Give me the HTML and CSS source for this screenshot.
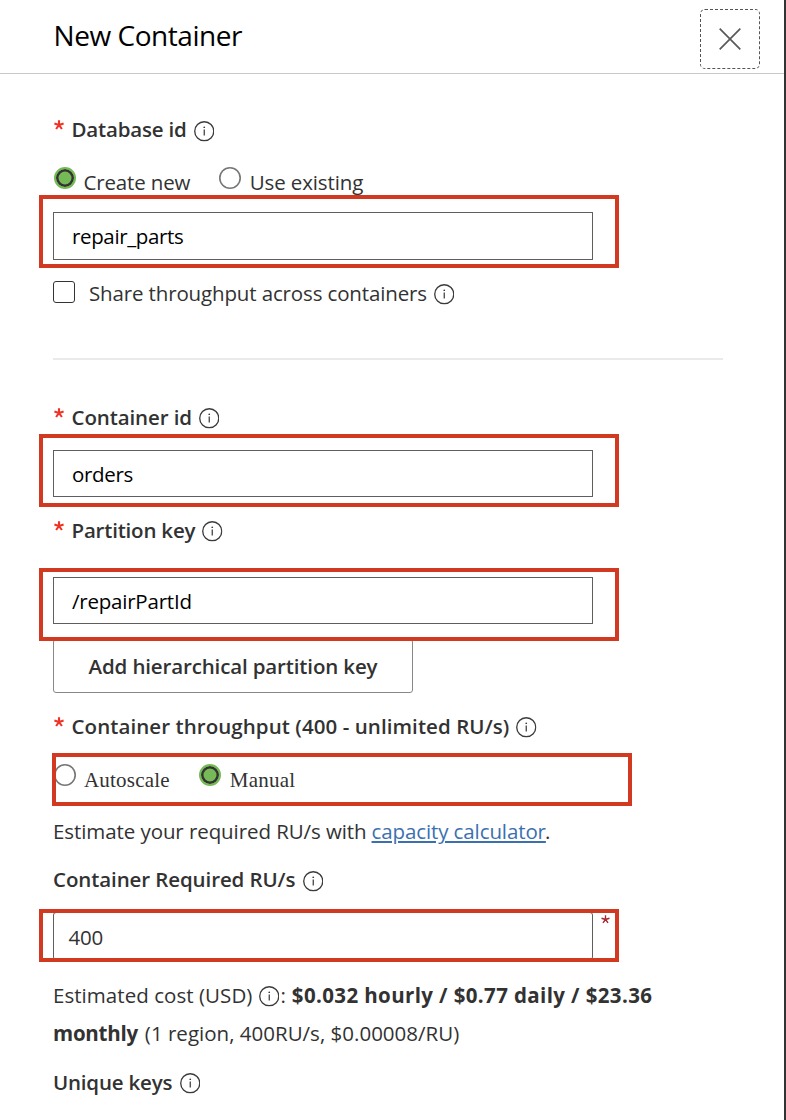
FILE: index.html
```
<!DOCTYPE html>
<html lang="en">
<head>
<meta charset="utf-8">
<title>New Container</title>
<link rel="stylesheet" href="styles.css">
</head>
<body>
<svg class="sprite" aria-hidden="true">
  <symbol id="info" viewBox="0 0 20 20">
    <circle cx="10" cy="10" r="9.3" fill="none" stroke="#3b3b3b" stroke-width="1.3"/>
    <path d="M10 8.3V14.2" stroke="#3b3b3b" stroke-width="1.2"/>
    <circle cx="10" cy="6.1" r=".85" fill="#3b3b3b"/>
  </symbol>
  <symbol id="star" viewBox="0 0 10 10">
    <path d="M5 5V.2M5 5L9.6 3.5M5 5L7.9 9M5 5L2.1 9M5 5L.4 3.5" fill="none" stroke="currentColor" stroke-width="2.1"/>
  </symbol>
</svg>
<main class="panel">
  <header class="header">
    <h1 class="title">New Container</h1>
    <button class="close" aria-label="Close">
      <svg width="22" height="22" viewBox="0 0 22 22"><path d="M.7.7L21.3 21.3M21.3.7L.7 21.3" stroke="#595959" stroke-width="1.7"/></svg>
    </button>
  </header>
  <form class="form">
    <div class="row label database">
      <svg class="star"><use href="#star"/></svg><span class="t-database">Database id</span><svg class="info"><use href="#info"/></svg>
    </div>
    <div class="row radios">
      <span class="radio checked"></span><span class="option t-create">Create new</span>
      <span class="radio"></span><span class="option t-existing">Use existing</span>
    </div>
    <div class="field database-field marked"><span class="t-repair">repair_parts</span></div>
    <div class="row share">
      <span class="checkbox"></span><span class="t-share">Share throughput across containers</span><svg class="info"><use href="#info"/></svg>
    </div>
    <div class="divider"></div>
    <div class="row label container">
      <svg class="star"><use href="#star"/></svg><span class="t-container">Container id</span><svg class="info"><use href="#info"/></svg>
    </div>
    <div class="field container-field marked"><span class="t-orders">orders</span></div>
    <div class="row label partition">
      <svg class="star"><use href="#star"/></svg><span class="t-partition">Partition key</span><svg class="info"><use href="#info"/></svg>
    </div>
    <div class="field partition-field marked"><span class="t-path">/repairPartId</span></div>
    <div class="add-key"><span class="t-add">Add hierarchical partition key</span></div>
    <div class="row label throughput">
      <svg class="star"><use href="#star"/></svg><span class="t-throughput">Container throughput (400 - unlimited RU/s)</span><svg class="info"><use href="#info"/></svg>
    </div>
    <div class="row radios scale marked">
      <span class="radio"></span><span class="option t-auto">Autoscale</span>
      <span class="radio checked"></span><span class="option t-manual">Manual</span>
    </div>
    <div class="row estimate"><span class="t-estimate">Estimate your required RU/s with</span><a class="link">capacity calculator</a><span class="stop">.</span></div>
    <div class="row label required">
      <span class="t-required">Container Required RU/s</span><svg class="info"><use href="#info"/></svg>
    </div>
    <div class="ru-line marked">
      <div class="field ru-field"><span class="t-400">400</span></div>
      <svg class="ru-star" viewBox="0 0 10 10"><path d="M5 5V.4M5 5L9.4 3.6M5 5L7.8 8.8M5 5L2.2 8.8M5 5L.6 3.6" fill="none" stroke="#a4262c" stroke-width="1.5"/></svg>
    </div>
    <div class="row cost"><span class="t-cost">Estimated cost (USD)</span><svg class="info"><use href="#info"/></svg><span class="colon">:</span><b class="t-price">$0.032 hourly / $0.77 daily / $23.36</b></div>
    <div class="row cost-more"><b class="t-monthly">monthly</b><span class="t-region">(1 region, 400RU/s, $0.00008/RU)</span></div>
    <div class="row label unique">
      <span class="t-unique">Unique keys</span><svg class="info"><use href="#info"/></svg>
    </div>
  </form>
</main>
</body>
</html>
```
FILE: styles.css
```
*, *::after { box-sizing: border-box; }
body { margin: 0; background: #fff; }
.sprite { display: none; }

.panel {
  width: 786px;
  height: 1120px;
  overflow: hidden;
  border-right: 2px solid #333;
  background: #fff;
  color: #323232;
  font: 20.5px/30px "Open Sans", "Noto Sans", sans-serif;
  white-space: nowrap;
}

.header {
  display: flex;
  justify-content: space-between;
  align-items: flex-start;
  height: 74px;
  padding: 9px 24px 0 53.5px;
  border-bottom: 1px solid #c8c8c8;
}
.title {
  margin: 6px 0 0;
  color: #000;
  font-size: 28px;
  line-height: 40px;
  font-weight: 400;
  letter-spacing: -0.45px;
}
.close {
  display: flex;
  align-items: center;
  justify-content: center;
  width: 60px;
  height: 60px;
  padding: 0 0 1px;
  border: 1px dashed #555;
  border-radius: 5px;
  background: #fff;
}

.form { padding: 40px 0 0 53px; }
.row { display: flex; height: 30px; }
.label { font-weight: 600; }
.star { flex: none; width: 10px; height: 10px; margin: 6px 7.5px 0 1px; color: #f03224; }
.info { flex: none; width: 20.5px; height: 20.5px; margin: 7px 0 0 7px; }

.radios { margin-top: 23px; }
.radio {
  flex: none;
  width: 22px;
  height: 22px;
  margin-left: 0.5px;
  border-radius: 50%;
  background: #fff;
  box-shadow: inset 0 0 0 1.6px #767676;
}
.radio.checked {
  border: 2px solid #76b957;
  background: #76b957;
  box-shadow: inset 0 0 0 2.5px #333;
}
.option { margin: 0 28px 0 8px; }

.field {
  width: 540px;
  height: 47px;
  padding: 8px 0 0 18px;
  border: 1px solid #605e5c;
  color: #000;
}
.marked { position: relative; }
.marked::after {
  content: "";
  position: absolute;
  z-index: 1;
  width: 580px;
  height: 73px;
  border: 4px solid #d13920;
  pointer-events: none;
}

.database-field { height: 48px; margin-top: 15px; }
.database-field::after { left: -15px; top: -18px; }
.share { margin-top: 18px; }
.share .info { margin-top: 6px; }
.checkbox {
  flex: none;
  width: 22px;
  height: 22px;
  margin: 3px 14px 0 0;
  border: 1px solid #333;
  border-radius: 3px;
}
.divider { width: 670px; height: 2px; margin-top: 50px; background: #eaeaea; }

.container { margin-top: 42px; }
.container .info, .partition .info { margin: 6px 0 0 7px; }
.container-field { margin-top: 18px; }
.container-field::after { left: -15px; top: -17px; }
.partition { margin-top: 18px; }
.partition-field { margin-top: 32px; }
.partition-field::after { left: -15px; top: -10px; }
.add-key {
  width: 360px;
  height: 54px;
  margin-top: 15px;
  padding-top: 11px;
  border: 1px solid #8a8886;
  border-radius: 3px;
  text-align: center;
  font-weight: 600;
}

.throughput { margin-top: 18px; }
.throughput .info { margin: 6px 0 0 7px; }
.scale {
  margin-top: 23px;
  font: 21px/30px "Liberation Serif", "Times New Roman", serif;
}
.scale .radio { margin-left: 1px; }
.scale .option { padding-top: 1px; }
.scale::after { left: -1px; top: -11px; height: 53px; }

.estimate { margin-top: 22px; }
.link {
  margin-left: 5px;
  color: #3b70b0;
  letter-spacing: -0.11px;
  text-decoration: underline;
  text-decoration-thickness: 2px;
  text-underline-offset: 2px;
}
.stop { margin-left: -1px; }
.required { margin-top: 18px; }
.required .info { margin-left: 7.5px; }
.ru-line { display: flex; margin-top: 18px; }
.ru-line::after { left: -14px; top: -3px; height: 53px; }
.ru-field { height: 48px; padding: 9px 0 0 14.5px; border-radius: 3px; color: #323232; }
.ru-star { width: 9px; height: 9px; margin: 2.5px 0 0 7.5px; }
.cost { margin-top: 20px; }
.cost .info { margin: 6px 0 0 6.5px; }
.colon { margin: 0 6px 0 1px; }
.cost-more { margin-top: 8px; }
.unique { margin-top: 19px; }
.unique .info { margin: 6px 0 0 7.5px; }

/* Per-string tracking */
.t-database { letter-spacing: -0.19px; }
.t-create { letter-spacing: -0.16px; }
.t-existing { letter-spacing: -0.12px; padding-left: 1px; }
.t-repair { letter-spacing: -0.36px; }
.t-share { letter-spacing: -0.14px; }
.t-container { letter-spacing: -0.11px; }
.t-orders { letter-spacing: -0.33px; }
.t-partition { letter-spacing: -0.2px; }
.t-path { letter-spacing: -0.22px; }
.t-add { letter-spacing: -0.14px; }
.t-throughput { letter-spacing: 0.07px; }
.t-auto { letter-spacing: 0.2px; }
.t-manual { padding-left: 1px; letter-spacing: 0.25px; }
.t-estimate { letter-spacing: -0.08px; }
.t-required { letter-spacing: -0.1px; }
.t-400 { letter-spacing: -0.22px; }
.t-cost { letter-spacing: 0.05px; }
.t-price { letter-spacing: 0.38px; }
.t-monthly { margin-right: 7px; letter-spacing: -0.25px; }
.t-region { letter-spacing: 0.01px; }
.t-unique { letter-spacing: -0.2px; }
```
